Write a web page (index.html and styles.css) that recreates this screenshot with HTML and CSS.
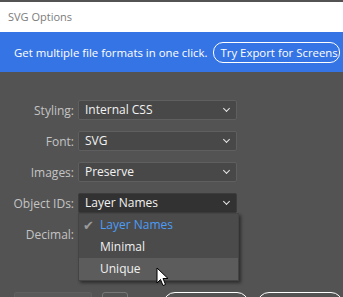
FILE: index.html
```html
<!DOCTYPE html>
<html lang="en">
<head>
  <meta charset="UTF-8" />
  <title>SVG Options</title>
  <link rel="stylesheet" href="styles.css">
</head>
<body>
  <div class="topline"></div>
  <div class="titlebar">SVG Options</div>
  <div class="promo">
    <span>Get multiple file formats in one click.</span>
    <button class="promo-btn">Try Export for Screens</button>
  </div>

  <div class="form">
    <div class="row">
      <label>Styling:</label>
      <div class="select">Internal CSS<span class="chev"></span></div>
    </div>
    <div class="row">
      <label>Font:</label>
      <div class="select">SVG<span class="chev"></span></div>
    </div>
    <div class="row">
      <label>Images:</label>
      <div class="select">Preserve<span class="chev"></span></div>
    </div>
    <div class="row">
      <label>Object IDs:</label>
      <div class="select open">Layer Names<span class="chev"></span>
        <ul class="menu">
          <li class="checked"><span class="check">✔</span>Layer Names</li>
          <li>Minimal</li>
          <li class="hover">Unique
            <svg class="cursor" width="13" height="20" viewBox="0 0 13 20">
              <path d="M1 1 L1 16 L4.5 12.5 L7 18.5 L9.5 17.5 L7 11.5 L12 11.5 Z" fill="#fff" stroke="#000" stroke-width="1"/>
            </svg>
          </li>
        </ul>
      </div>
    </div>
    <div class="row">
      <label>Decimal:</label>
      <div class="select"><span class="chev"></span></div>
    </div>
  </div>

  <div class="footer">
    <div class="field"></div>
    <div class="icon-box"></div>
    <div class="btn"></div>
    <div class="btn"></div>
  </div>
</body>
</html>
```

FILE: styles.css
```css
body {
  margin: 0;
  background: #535353;
  font-family: 'Open Sans', sans-serif;
  font-size: 12px;
  overflow: hidden;
  width: 343px;
  height: 297px;
}
.topline {
  height: 2px;
}
.titlebar {
  height: 30px;
  background: #fff;
  color: #7b7b7b;
  font-size: 11px;
  line-height: 30px;
  padding-left: 8px;
}
.promo {
  height: 40px;
  background: #3574e5;
  color: #fff;
  font-size: 11.4px;
  display: flex;
  align-items: center;
  padding-left: 14px;
  gap: 5px;
  white-space: nowrap;
  overflow: hidden;
}
.promo-btn {
  font: inherit;
  color: #fff;
  background: transparent;
  border: 1.5px solid #fff;
  border-radius: 10px;
  height: 21px;
  padding: 0 1px 0 7px;
  flex-shrink: 0;
}
.form {
  padding-top: 28px;
  display: flex;
  flex-direction: column;
  gap: 11px;
}
.row {
  display: grid;
  grid-template-columns: 74px 159px;
  column-gap: 4px;
  height: 20px;
  align-items: center;
}
.row label {
  text-align: right;
  color: #c4c4c4;
}
.select {
  position: relative;
  height: 20px;
  box-sizing: border-box;
  background: #484848;
  border: 1px solid #5f5f5f;
  border-radius: 2px;
  color: #f2f2f2;
  line-height: 18px;
  padding-left: 6px;
}
.select.open {
  background: #323232;
  border-color: #3c3c3c;
}
.chev {
  position: absolute;
  right: 7px;
  top: 5px;
  width: 4px;
  height: 4px;
  border-right: 1.5px solid #e8e8e8;
  border-bottom: 1.5px solid #e8e8e8;
  transform: rotate(45deg);
}
.menu {
  position: absolute;
  top: 19px;
  left: -1px;
  width: 159px;
  margin: 0;
  padding: 0;
  list-style: none;
  background: #4b4b4b;
  border: 1px solid #444;
  box-shadow: 2px 2px 3px rgba(0, 0, 0, 0.45);
  z-index: 10;
}
.menu li {
  position: relative;
  height: 22px;
  line-height: 22px;
  padding-left: 21px;
  color: #f0f0f0;
}
.menu li.checked {
  color: #4d9cf5;
}
.menu li.hover {
  background: #5c5c5c;
}
.check {
  position: absolute;
  left: 4px;
  color: #9a9a9a;
  font-size: 13px;
}
.cursor {
  position: absolute;
  left: 77px;
  top: 9px;
}
.footer {
  margin-top: 48px;
  display: flex;
  padding-left: 14px;
  height: 24px;
}
.field {
  width: 78px;
  background: #595959;
  border: 1px solid #5f5f5f;
  border-radius: 2px;
}
.icon-box {
  width: 24px;
  margin-left: 10px;
  border: 1px solid #777;
  border-radius: 3px;
}
.btn {
  width: 86px;
  margin-left: 35px;
  border: 1.5px solid #fff;
  border-radius: 12px;
}
.btn + .btn {
  margin-left: 8px;
}
```
